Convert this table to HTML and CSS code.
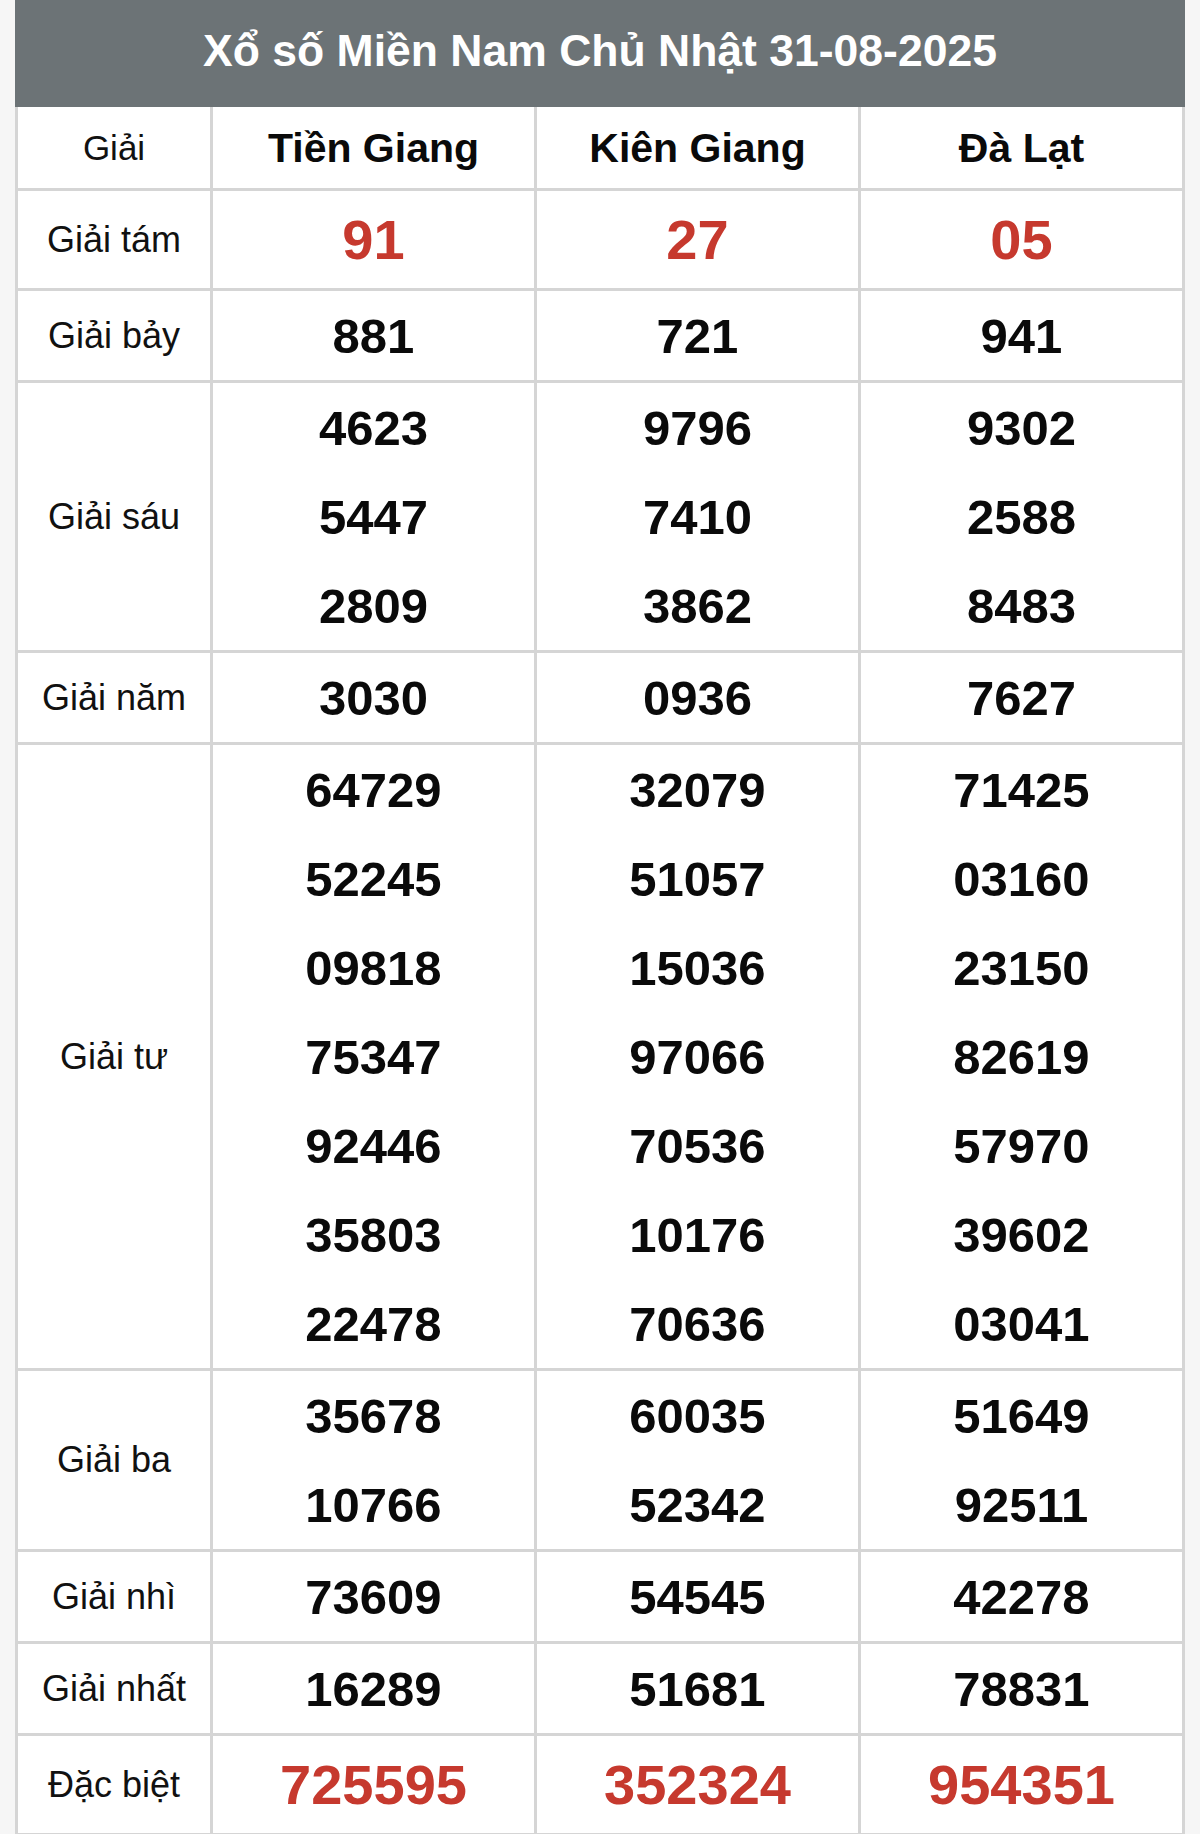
FILE: index.html
```html
<!DOCTYPE html>
<html lang="vi">
<head>
<meta charset="utf-8">
<title>Xổ số Miền Nam Chủ Nhật 31-08-2025</title>
<link rel="stylesheet" href="styles.css">
</head>
<body>
<div class="wrap">
  <div class="title">Xổ số Miền Nam Chủ Nhật 31-08-2025</div>
  <table class="kq">
    <tr class="head">
      <td class="lbl"><div class="ln-h">Giải</div></td>
      <th><div class="ln-h">Tiền Giang</div></th>
      <th><div class="ln-h">Kiên Giang</div></th>
      <th><div class="ln-h">Đà Lạt</div></th>
    </tr>
    <tr class="big">
      <td class="lbl">Giải tám</td>
      <td><div class="ln red">91</div></td>
      <td><div class="ln red">27</div></td>
      <td><div class="ln red">05</div></td>
    </tr>
    <tr>
      <td class="lbl">Giải bảy</td>
      <td><div class="ln">881</div></td>
      <td><div class="ln">721</div></td>
      <td><div class="ln">941</div></td>
    </tr>
    <tr>
      <td class="lbl">Giải sáu</td>
      <td><div class="ln">4623</div><div class="ln">5447</div><div class="ln">2809</div></td>
      <td><div class="ln">9796</div><div class="ln">7410</div><div class="ln">3862</div></td>
      <td><div class="ln">9302</div><div class="ln">2588</div><div class="ln">8483</div></td>
    </tr>
    <tr>
      <td class="lbl">Giải năm</td>
      <td><div class="ln">3030</div></td>
      <td><div class="ln">0936</div></td>
      <td><div class="ln">7627</div></td>
    </tr>
    <tr>
      <td class="lbl">Giải tư</td>
      <td><div class="ln">64729</div><div class="ln">52245</div><div class="ln">09818</div><div class="ln">75347</div><div class="ln">92446</div><div class="ln">35803</div><div class="ln">22478</div></td>
      <td><div class="ln">32079</div><div class="ln">51057</div><div class="ln">15036</div><div class="ln">97066</div><div class="ln">70536</div><div class="ln">10176</div><div class="ln">70636</div></td>
      <td><div class="ln">71425</div><div class="ln">03160</div><div class="ln">23150</div><div class="ln">82619</div><div class="ln">57970</div><div class="ln">39602</div><div class="ln">03041</div></td>
    </tr>
    <tr>
      <td class="lbl">Giải ba</td>
      <td><div class="ln">35678</div><div class="ln">10766</div></td>
      <td><div class="ln">60035</div><div class="ln">52342</div></td>
      <td><div class="ln">51649</div><div class="ln">92511</div></td>
    </tr>
    <tr>
      <td class="lbl">Giải nhì</td>
      <td><div class="ln">73609</div></td>
      <td><div class="ln">54545</div></td>
      <td><div class="ln">42278</div></td>
    </tr>
    <tr>
      <td class="lbl">Giải nhất</td>
      <td><div class="ln">16289</div></td>
      <td><div class="ln">51681</div></td>
      <td><div class="ln">78831</div></td>
    </tr>
    <tr class="big">
      <td class="lbl">Đặc biệt</td>
      <td><div class="ln red">725595</div></td>
      <td><div class="ln red">352324</div></td>
      <td><div class="ln red">954351</div></td>
    </tr>
  </table>
  <div class="foot"></div>
</div>
</body>
</html>
```

FILE: styles.css
```css
html, body {
  margin: 0;
  padding: 0;
  background: #f6f6f6;
}

body {
  font-family: "Liberation Sans", Arial, Helvetica, sans-serif;
  color: #000;
}

.wrap {
  width: 1170px;
  margin-left: 15px;
}

.title {
  height: 107px;
  line-height: 102px;
  background: #6c7376;
  color: #ffffff;
  font-size: 44.5px;
  font-weight: bold;
  text-align: center;
}

.kq {
  width: 1170px;
  border-collapse: collapse;
  background: #ffffff;
  table-layout: fixed;
}

.kq td, .kq th {
  border: 3px solid #d5d5d5;
  padding: 0;
  text-align: center;
  vertical-align: middle;
}

.kq tr:first-child td, .kq tr:first-child th {
  border-top: 0;
}

.kq .lbl {
  width: 192px;
  font-size: 36px;
  font-weight: normal;
  color: #111;
}

.kq th {
  font-size: 41px;
  font-weight: bold;
  color: #0a0a0a;
}

.ln-h {
  height: 81px;
  line-height: 82px;
}

.head .lbl .ln-h {
  font-size: 35px;
}

.ln {
  height: 89px;
  line-height: 91px;
  font-size: 49px;
  font-weight: bold;
  color: #0a0a0a;
}

.big .ln {
  height: 97px;
  line-height: 98px;
}

.ln.red {
  font-size: 56px;
  color: #c6392e;
}

.foot {
  height: 6px;
  background: #b08c70;
}
```
